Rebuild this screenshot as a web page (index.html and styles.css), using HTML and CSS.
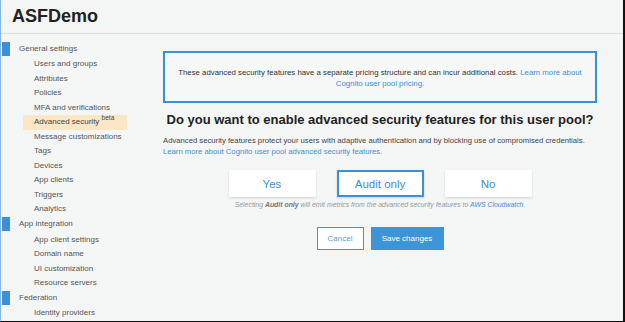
FILE: index.html
```html
<!DOCTYPE html>
<html lang="en">
  <head>
    <meta charset="UTF-8" />
    <title>ASFDemo</title>
    <link rel="stylesheet" href="styles.css">
  </head>
  <body>
    <div class="frame">
      <header class="topbar">
        <h1>ASFDemo</h1>
      </header>

      <div class="layout">
        <nav class="sidebar">
          <div class="section">General settings</div>
          <a class="item">Users and groups</a>
          <a class="item">Attributes</a>
          <a class="item">Policies</a>
          <a class="item">MFA and verifications</a>
          <a class="item active">Advanced security <sup>beta</sup></a>
          <a class="item">Message customizations</a>
          <a class="item">Tags</a>
          <a class="item">Devices</a>
          <a class="item">App clients</a>
          <a class="item">Triggers</a>
          <a class="item">Analytics</a>
          <div class="section">App integration</div>
          <a class="item">App client settings</a>
          <a class="item">Domain name</a>
          <a class="item">UI customization</a>
          <a class="item">Resource servers</a>
          <div class="section">Federation</div>
          <a class="item">Identity providers</a>
        </nav>

        <main class="content">
          <div class="notice">
            <p>These advanced security features have a separate pricing structure and can incur additional costs. <a href="#">Learn more about</a></p>
            <p><a href="#">Cognito user pool pricing.</a></p>
          </div>

          <h2>Do you want to enable advanced security features for this user pool?</h2>

          <p class="intro">
            Advanced security features protect your users with adaptive authentication and by blocking use of compromised credentials.
            <a href="#">Learn more about Cognito user pool advanced security features.</a>
          </p>

          <div class="choices">
            <button class="choice">Yes</button>
            <button class="choice selected">Audit only</button>
            <button class="choice">No</button>
          </div>
          <p class="hint">
            Selecting <b>Audit only</b> will emit metrics from the advanced security features to <a href="#">AWS Cloudwatch</a>.
          </p>

          <div class="actions">
            <button class="btn-cancel">Cancel</button>
            <button class="btn-save">Save changes</button>
          </div>
        </main>
      </div>
    </div>
  </body>
</html>
```

FILE: styles.css
```css
* {
  margin: 0;
  padding: 0;
  box-sizing: border-box;
}

body {
  font-family: "Liberation Sans", Arial, sans-serif;
  background: #f4f5f5;
  color: #444;
  width: 625px;
  height: 322px;
  overflow: hidden;
}

.frame {
  width: 625px;
  height: 322px;
  border-left: 1px solid #7fb4e3;
  border-right: 2px solid #111;
  border-bottom: 1px solid #111;
  overflow: hidden;
}

.topbar {
  height: 34px;
  border-bottom: 1px solid #dcdddd;
  padding: 6px 0 0 11px;
}

.topbar h1 {
  font-size: 18px;
  font-weight: bold;
  color: #222;
  line-height: 20px;
}

.layout {
  display: flex;
}

.sidebar {
  width: 150px;
  flex-shrink: 0;
  padding-top: 7.5px;
  display: flex;
  flex-direction: column;
}

.section {
  position: relative;
  font-size: 8px;
  color: #555;
  line-height: 14.5px;
  padding: 0 0 1.3px 18px;
  white-space: nowrap;
}

.section::before {
  content: "";
  position: absolute;
  left: 1px;
  top: 0;
  width: 8px;
  height: 14px;
  background: #3d8fd6;
}

.item {
  font-size: 8px;
  color: #555;
  line-height: 14.5px;
  margin-left: 22px;
  width: 104px;
  padding-left: 11px;
  white-space: nowrap;
}

.item.active {
  background: #fbe6c6;
  color: #444;
}

.item sup {
  font-size: 6.5px;
  line-height: 0;
}

.content {
  flex: 1;
  padding: 17px 26px 0 12px;
  display: flex;
  flex-direction: column;
  align-items: center;
}

a {
  color: #3d8fd6;
  text-decoration: none;
}

.notice {
  width: 100%;
  height: 52px;
  border: 2px solid #3d8fd6;
  background: #f6f7f7;
  font-size: 7.8px;
  color: #333;
  text-align: center;
  line-height: 11px;
  padding: 14px 8px 0;
}

.notice p {
  white-space: nowrap;
}

h2 {
  font-size: 13px;
  font-weight: bold;
  color: #222;
  margin-top: 8px;
  line-height: 17px;
  white-space: nowrap;
}

.intro {
  align-self: stretch;
  font-size: 7.7px;
  color: #444;
  line-height: 10.5px;
  margin-top: 8px;
}

.choices {
  display: flex;
  gap: 21px;
  margin-top: 13px;
}

.choice {
  width: 87px;
  height: 27px;
  background: #fff;
  border: 2px solid #fff;
  box-shadow: 0 1px 2px rgba(0, 0, 0, 0.15);
  font-family: "Liberation Sans", Arial, sans-serif;
  font-size: 11.5px;
  color: #3d8fd6;
}

.choice.selected {
  border-color: #3d8fd6;
}

.hint {
  font-size: 6.9px;
  font-style: italic;
  color: #999;
  margin-top: 3px;
  line-height: 9px;
}

.hint b {
  color: #777;
}

.actions {
  display: flex;
  gap: 7px;
  margin-top: 18px;
}

.actions button {
  height: 23px;
  font-family: "Liberation Sans", Arial, sans-serif;
  font-size: 8px;
  border: 1px solid #3d94d6;
}

.btn-cancel {
  width: 47px;
  background: #fff;
  color: #5a9fd8;
}

.btn-save {
  width: 73px;
  background: #3d94d6;
  color: #fff;
}
```
